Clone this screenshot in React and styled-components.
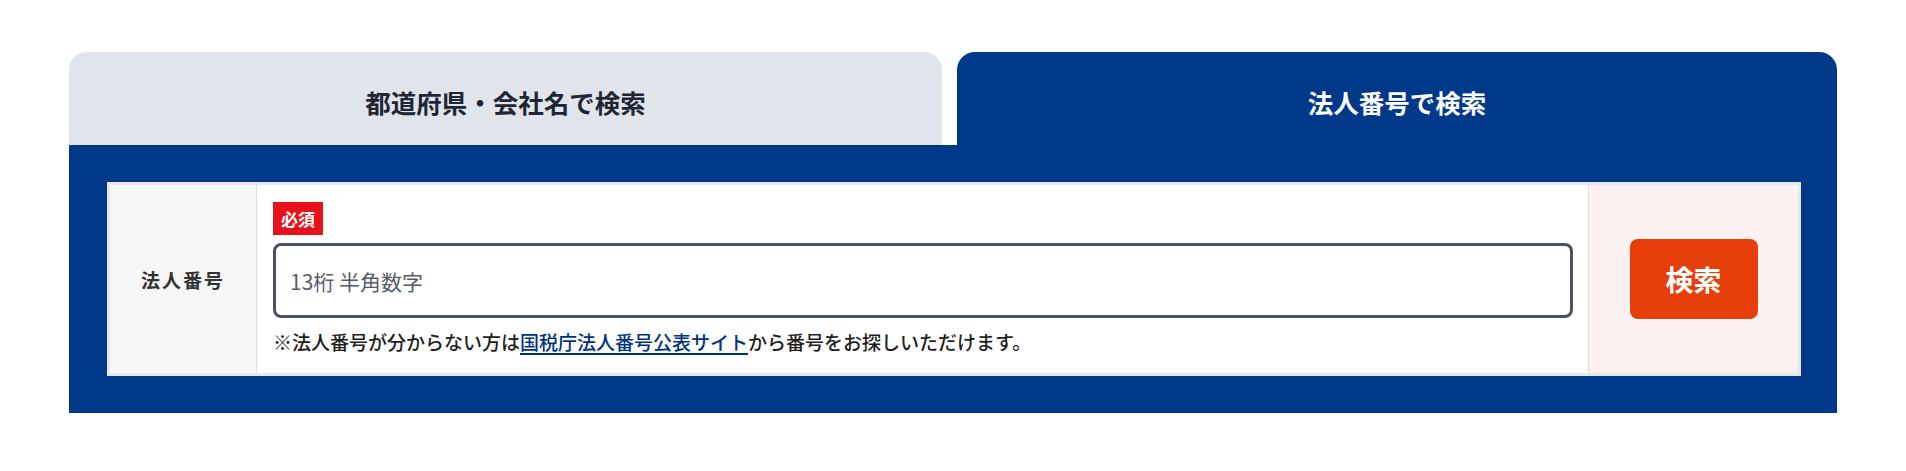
import React from "react";
import styled, { createGlobalStyle } from "styled-components";

const GlobalStyle = createGlobalStyle`
  body {
    margin: 0;
    background: #ffffff;
    font-family: "Noto Sans CJK JP", "Noto Sans", sans-serif;
    color: #222222;
  }
`;

const Wrapper = styled.div`
  width: 1768px;
  margin: 52px auto 0;
`;

const TabList = styled.div`
  display: grid;
  grid-template-columns: 873px 1fr;
  gap: 15px;
`;

const Tab = styled.button`
  height: 93px;
  border: none;
  border-radius: 18px 18px 0 0;
  padding: 6px 0 0;
  display: flex;
  align-items: center;
  justify-content: center;
  font-family: inherit;
  font-size: 25.5px;
  font-weight: 700;
  cursor: pointer;
  background: ${(p) => (p.$active ? "#00388a" : "#e0e5ec")};
  color: ${(p) => (p.$active ? "#ffffff" : "#1f2633")};
`;

const Panel = styled.div`
  background: #00388a;
  padding: 37px 36px 37px 38px;
`;

const Card = styled.div`
  display: grid;
  grid-template-columns: 147px 1fr 210px;
  border: 3px solid #e8e8e8;
  background: #ffffff;
`;

const LabelCell = styled.div`
  display: flex;
  align-items: center;
  justify-content: center;
  background: #f6f6f6;
  border-right: 1px solid #dcdcdc;
  font-size: 19px;
  font-weight: 700;
  letter-spacing: 2px;
  color: #333333;
`;

const FieldCell = styled.div`
  padding: 17px 15px 18px 16px;
  display: flex;
  flex-direction: column;
  align-items: flex-start;
`;

const Badge = styled.span`
  display: inline-flex;
  align-items: center;
  height: 33px;
  padding: 0 8px;
  background: #e8101a;
  color: #ffffff;
  font-size: 17px;
  font-weight: 700;
`;

const Input = styled.input`
  box-sizing: border-box;
  width: 100%;
  height: 75px;
  margin-top: 8px;
  padding: 0 14px;
  border: 3px solid #4a5161;
  border-radius: 8px;
  font-family: inherit;
  font-size: 21px;
  color: #222222;
  outline: none;

  &::placeholder {
    color: #555c68;
  }
`;

const Help = styled.p`
  margin: 10px 0 0;
  font-size: 19px;
  line-height: 27px;
  font-weight: 500;
  color: #1e1e1e;
`;

const HelpLink = styled.a`
  color: #00337f;
  font-weight: 500;
  text-decoration: underline;
  text-decoration-thickness: 2px;
  text-underline-offset: 3px;
`;

const ActionCell = styled.div`
  display: flex;
  align-items: center;
  justify-content: center;
  background: #fdf2f1;
  border-left: 1px solid #e4dcdc;
`;

const SearchButton = styled.button`
  width: 128px;
  height: 80px;
  border: none;
  border-radius: 8px;
  background: #e73f0c;
  color: #ffffff;
  font-family: inherit;
  font-size: 28px;
  font-weight: 700;
  cursor: pointer;
`;

export default function App() {
  return (
    <>
      <GlobalStyle />
      <Wrapper>
        <TabList>
          <Tab>都道府県・会社名で検索</Tab>
          <Tab $active>法人番号で検索</Tab>
        </TabList>
        <Panel>
          <Card>
            <LabelCell>法人番号</LabelCell>
            <FieldCell>
              <Badge>必須</Badge>
              <Input placeholder="13桁 半角数字" />
              <Help>
                ※法人番号が分からない方は
                <HelpLink href="#">国税庁法人番号公表サイト</HelpLink>
                から番号をお探しいただけます。
              </Help>
            </FieldCell>
            <ActionCell>
              <SearchButton>検索</SearchButton>
            </ActionCell>
          </Card>
        </Panel>
      </Wrapper>
    </>
  );
}
